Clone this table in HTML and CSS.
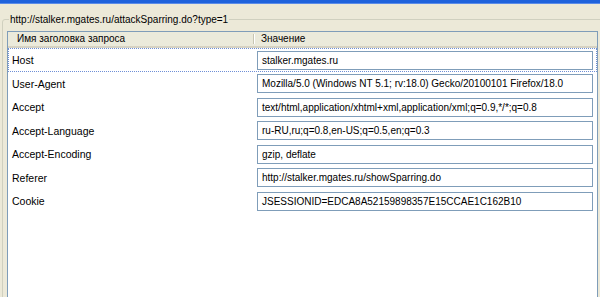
FILE: index.html
```html
<!DOCTYPE html>
<html lang="ru">
<head>
    <meta charset="UTF-8">
    <title>Заголовки запроса</title>
    <link rel="stylesheet" href="styles.css">
</head>
<body>
    <div class="titlebar"></div>

    <fieldset class="group">
        <legend>http://stalker.mgates.ru/attackSparring.do?type=1</legend>

        <div class="headers">
            <div class="headers-head">
                <div class="col-name">Имя заголовка запроса</div>
                <div class="col-value">Значение</div>
            </div>

            <div class="row selected">
                <div class="name">Host</div>
                <div class="value">stalker.mgates.ru</div>
            </div>
            <div class="row">
                <div class="name">User-Agent</div>
                <div class="value">Mozilla/5.0 (Windows NT 5.1; rv:18.0) Gecko/20100101 Firefox/18.0</div>
            </div>
            <div class="row">
                <div class="name">Accept</div>
                <div class="value">text/html,application/xhtml+xml,application/xml;q=0.9,*/*;q=0.8</div>
            </div>
            <div class="row">
                <div class="name">Accept-Language</div>
                <div class="value">ru-RU,ru;q=0.8,en-US;q=0.5,en;q=0.3</div>
            </div>
            <div class="row">
                <div class="name">Accept-Encoding</div>
                <div class="value">gzip, deflate</div>
            </div>
            <div class="row">
                <div class="name">Referer</div>
                <div class="value">http://stalker.mgates.ru/showSparring.do</div>
            </div>
            <div class="row">
                <div class="name">Cookie</div>
                <div class="value">JSESSIONID=EDCA8A52159898357E15CCAE1C162B10</div>
            </div>
        </div>
    </fieldset>
</body>
</html>
```

FILE: styles.css
```css
html, body {
    margin: 0;
    padding: 0;
}
body {
    width: 600px;
    height: 297px;
    overflow: hidden;
    background: #ece9d8;
    font-family: "Liberation Sans", Arial, sans-serif;
    font-size: 10.5px;
    color: #000;
}
.titlebar {
    height: 3px;
    background: #1f63dc;
    border-bottom: 1px solid #5b8ce8;
}
.group {
    margin: 9px -20px 0 2px;
    padding: 5px 0 0 4px;
    border: 1px solid #d0d0bf;
    border-radius: 3px;
    min-width: 0;
}
.group legend {
    margin-left: 2px;
    padding: 0 1px;
    line-height: 13px;
    font-size: 10px;
}
.headers {
    width: 589px;
    height: 300px;
    background: #fff;
    border: 1px solid #7f9db9;
}
.headers-head {
    display: flex;
    height: 14px;
    line-height: 14px;
    font-size: 10px;
    background: #ebeadb;
    border-bottom: 2px solid #d6d2c2;
}
.col-name {
    width: 236px;
    padding-left: 9px;
    border-right: 1px solid #c7c5b2;
    box-shadow: 1px 0 0 #fff;
    margin: 2px 0;
    line-height: 10px;
    height: 10px;
}
.col-value {
    padding-left: 7px;
    margin-top: 2px;
    line-height: 10px;
}
.row {
    display: flex;
    align-items: center;
    height: 22px;
    border: 1px solid transparent;
}
.row:nth-child(odd) {
    height: 21px;
}
.row.selected {
    border: 1px dotted #6f8fd6;
}
.name {
    width: 245px;
    padding-left: 3px;
    flex-shrink: 0;
}
.value {
    width: 330px;
    height: 17px;
    line-height: 17px;
    padding-left: 4px;
    font-size: 10px;
    border: 1px solid #7f9db9;
    white-space: nowrap;
    overflow: hidden;
}
```
